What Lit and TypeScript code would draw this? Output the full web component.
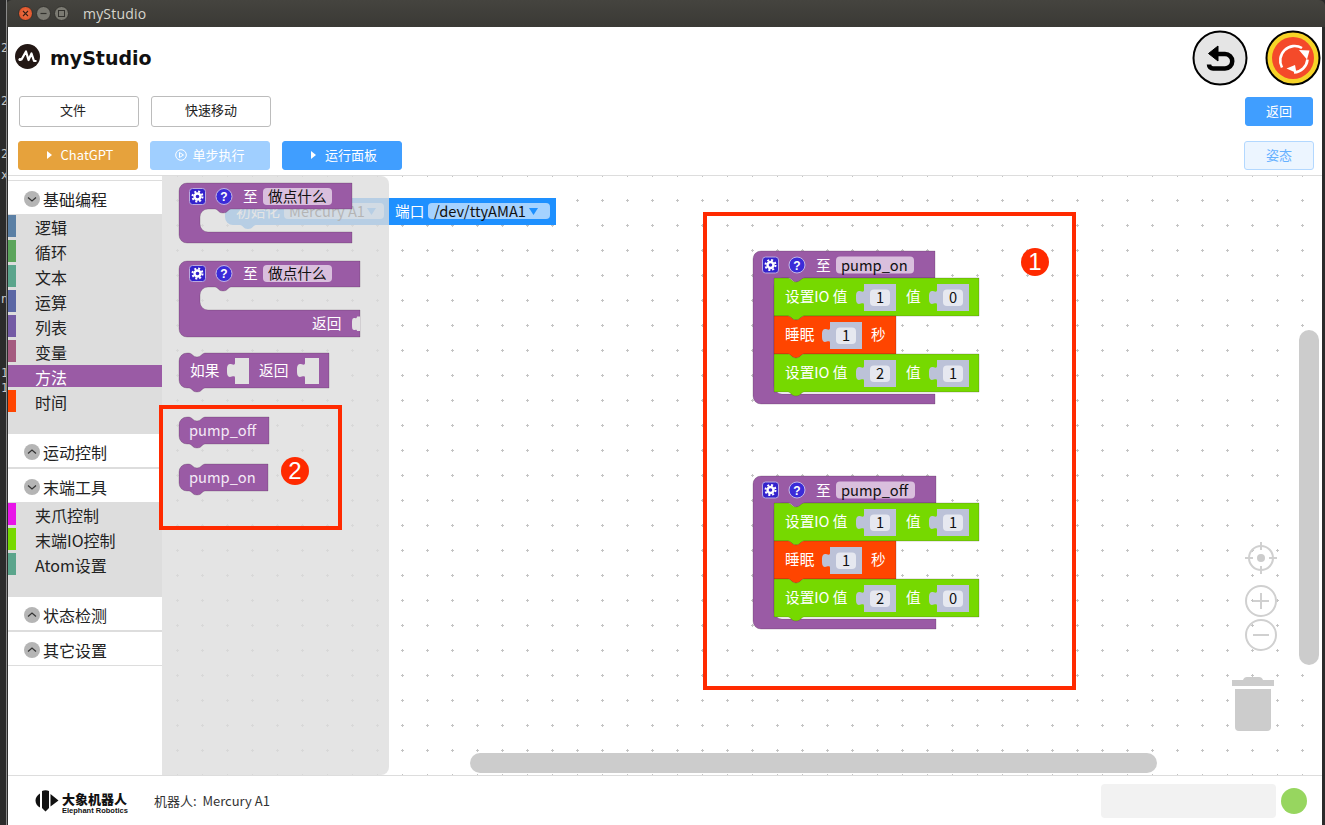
import { LitElement, html, svg, css } from 'lit';
import { customElement } from 'lit/decorators.js';

const PURPLE = '#9a5ba5';
const GREEN = '#76d900';
const RED = '#ff4500';
const FLY = '#e2e2e2';

const notch = 'c 3 0 4 4 8 4 s 5 -4 8 -4';
const notchBack = 'c -3 0 -3 4 -8 4 s -5 -4 -8 -4';
// puzzle tab on the left side of a value input, drawn bottom to top
const tab = 'c 0 -3 -3 -1 -5 -1 c -3 0 -3 -4 -3 -6.5 s 0 -6.5 3 -6.5 c 2 0 5 2 5 -1';

// definition block with a cavity ("至 ...")
function defBlock(x: number, y: number, right: number, rowBot: number, cavBot: number, bottom: number) {
  const d = `M${x} ${y + 8} a8 8 0 0 1 8 -8 H${right} V${rowBot} H${x + 52} ${notchBack} H${x + 29} a8 8 0 0 0 -8 8 V${cavBot - 8} a8 8 0 0 0 8 8 H${right} V${bottom} H${x + 8} a8 8 0 0 1 -8 -8 Z`;
  return svg`<path class="edge" d=${d} fill=${PURPLE}></path>`;
}

function defHead(x: number, y: number, label: string, chipW: number) {
  return svg`
    <rect x=${x + 0.5} y=${y + 0.5} width="16" height="16" rx="3" fill="#3322cc" stroke="#b9a9e0"></rect>
    <circle cx=${x + 8.5} cy=${y + 8.5} r="3" fill="none" stroke="#fff" stroke-width="2.4"></circle>
    <circle cx=${x + 8.5} cy=${y + 8.5} r="5" fill="none" stroke="#fff" stroke-width="2" stroke-dasharray="2 1.93"></circle>
    <circle cx=${x + 35} cy=${y + 8.5} r="8" fill="#3b2bd8" stroke="#c3b6e6"></circle>
    <text class="q" x=${x + 35} y=${y + 13} text-anchor="middle">?</text>
    <text class="lbl" x=${x + 54} y=${y + 14}>至</text>
    <rect x=${x + 74} y=${y} width=${chipW} height="17" rx="4" fill="#d9bfdd"></rect>
    <text class="val" x=${x + 79} y=${y + 14}>${label}</text>`;
}

function stmt(x: number, y: number, w: number, h: number, color: string) {
  const d = `M${x} ${y} H${x + 14} ${notch} H${x + w} V${y + h} H${x + 30} ${notchBack} H${x} Z`;
  return svg`<path class="edge" d=${d} fill=${color}></path>`;
}

function call(x: number, y: number, w: number, h: number, label: string) {
  const d = `M${x} ${y + 8} a8 8 0 0 1 8 -8 H${x + 10} ${notch} H${x + w} V${y + h} H${x + 26} ${notchBack} H${x + 8} a8 8 0 0 1 -8 -8 Z`;
  return svg`<path class="edge" d=${d} fill=${PURPLE}></path>
    <text class="lbl light" x=${x + 10} y=${y + 19}>${label}</text>`;
}

// numeric shadow block plugged into a statement row
function numInput(x: number, y: number, n: string) {
  const d = `M${x} ${y} H${x + 32} V${y + 27} H${x} V${y + 21} ${tab} Z`;
  return svg`<path d=${d} fill="#bcc2d8"></path>
    <rect x=${x + 6} y=${y + 5.5} width="20" height="16.5" rx="4" fill="#e6e8f0"></rect>
    <text class="val" x=${x + 16} y=${y + 19} text-anchor="middle">${n}</text>`;
}

function socket(x: number, y: number, w: number, h: number) {
  const d = `M${x} ${y} H${x + w} V${y + h} H${x} V${y + 20} ${tab} Z`;
  return svg`<path d=${d} fill=${FLY}></path>`;
}

function ioRow(x: number, y: number, a: string, b: string) {
  return svg`${stmt(x, y, 205, 38, GREEN)}
    <text class="lbl" x=${x + 11} y=${y + 24}>设置IO 值</text>
    ${numInput(x + 90, y + 6, a)}
    <text class="lbl" x=${x + 132} y=${y + 24}>值</text>
    ${numInput(x + 163, y + 6, b)}`;
}

function procBlock(x: number, y: number, right: number, name: string, chipW: number, a: string, b: string, c: string, d: string) {
  return svg`${defBlock(x, y, right, y + 27, y + 143, y + 153)}
    ${defHead(x + 9, y + 5.5, name, chipW)}
    ${ioRow(x + 21, y + 27, a, b)}
    ${stmt(x + 21, y + 65, 122, 38, RED)}
    <text class="lbl" x=${x + 32} y=${y + 89}>睡眠</text>
    ${numInput(x + 77, y + 71, '1')}
    <text class="lbl" x=${x + 118} y=${y + 89}>秒</text>
    ${ioRow(x + 21, y + 103, c, d)}`;
}

interface Item { name: string; color: string; active?: boolean; }

const BASIC: Item[] = [
  { name: '逻辑', color: '#5b80a5' },
  { name: '循环', color: '#5ba55b' },
  { name: '文本', color: '#5ba58c' },
  { name: '运算', color: '#5b67a5' },
  { name: '列表', color: '#745ba5' },
  { name: '变量', color: '#a55b80' },
  { name: '方法', color: PURPLE, active: true },
  { name: '时间', color: RED },
];

const TOOLS: Item[] = [
  { name: '夹爪控制', color: '#e815e8' },
  { name: '末端IO控制', color: GREEN },
  { name: 'Atom设置', color: '#5ba58c' },
];

const TERM = [
  { y: 41, c: '2' }, { y: 94, c: '2' }, { y: 147, c: '2' }, { y: 168, c: 'x' },
  { y: 292, c: 'n' }, { y: 366, c: '1' }, { y: 381, c: '1' },
];

@customElement('app-root')
export class AppRoot extends LitElement {
  static styles = css`
    :host {
      display: block;
      width: 1325px;
      height: 825px;
      overflow: hidden;
      font-family: "Noto Sans CJK SC", "Noto Sans", sans-serif;
    }
    .app { position: relative; display: flex; width: 1325px; height: 825px; background: #2b2b2b; }
    .term { position: relative; width: 7px; flex: none; background: #2b2b2b; border-right: 1px solid #8a8a8a; box-sizing: border-box; }
    .term span { position: absolute; left: 1px; font: 12px "DejaVu Sans Mono", monospace; color: #c9c9c9; width: 5px; overflow: hidden; }
    .win { flex: 1; display: flex; flex-direction: column; min-width: 0; margin-left: 1px; }
    .titlebar {
      height: 27px; flex: none; display: flex; align-items: center; margin-left: -2px; padding-left: 12px;
      background: linear-gradient(#45443f, #3a3935); border-radius: 6px 6px 0 0;
      color: #d6d5cd; font: 14px "Open Sans", sans-serif;
    }
    .wbtn { width: 15px; height: 15px; border-radius: 50%; margin-right: 3px; background: #7b7a72; border: 1px solid #33322e; box-sizing: border-box; display: flex; align-items: center; justify-content: center; }
    .wbtn.close { background: radial-gradient(#f0764a, #d9481f); }
    .wtitle { margin-left: 11px; letter-spacing: .2px; }
    .page { flex: 1; display: flex; flex-direction: column; background: #fff; min-height: 0; margin-right: 3px; }
    .head { height: 63px; box-sizing: border-box; flex: none; display: flex; align-items: center; padding: 0 1px 2px 7px; }
    .logo { width: 25px; height: 25px; flex: none; margin-bottom: 2px; }
    .brand { margin-left: 10px; font: bold 19px "DejaVu Sans", sans-serif; color: #111; flex: 1; }
    .round { width: 56px; height: 56px; margin-left: 17px; flex: none; display: block; }
    .bar { display: flex; align-items: center; gap: 12px; flex: none; }
    .bar.one { height: 31px; margin-top: 6px; padding: 0 9px 0 11px; }
    .bar.two { height: 29px; margin-top: 14px; padding: 0 8px 0 10px; }
    .spacer { flex: 1; }
    .btn {
      height: 100%; width: 120px; box-sizing: border-box; border-radius: 3px; border: 1px solid #bcbcbc; padding-bottom: 2px;
      background: #fff; color: #222; font-size: 13px; display: flex; align-items: center; justify-content: center; gap: 9px;
    }
    .btn.plain { padding-bottom: 4px; }
    .btn.file { padding-right: 12px; }
    .btn.gold { background: #e6a23c; border-color: #e6a23c; color: #fff; padding-left: 4px; }
    .btn.pale { background: #a0cfff; border-color: #a0cfff; color: #fff; gap: 5px; }
    .btn.blue { background: #409eff; border-color: #409eff; color: #fff; padding-left: 4px; }
    .btn.back { width: 68px; height: 29px; background: #409eff; border-color: #409eff; color: #fff; }
    .btn.pose { width: 70px; background: #ecf5ff; border-color: #b3d8ff; color: #66b1ff; }
    .caret { width: 0; height: 0; border-left: 5px solid #fff; border-top: 4px solid transparent; border-bottom: 4px solid transparent; }
    .main { flex: 1; display: flex; min-height: 0; margin-top: 5px; border-top: 1px solid #ddd; }
    .side { width: 154px; flex: none; background: #fff; padding-top: 4px; font-size: 16px; color: #222; }
    .group { height: 33px; box-sizing: border-box; display: flex; align-items: center; padding: 2px 0 0 16px; gap: 3px; }
    .chev { width: 16px; height: 16px; flex: none; }
    .line { height: 1px; background: #ddd; }
    .line.wide { height: 2px; }
    .panel { background: #ddd; padding: 1px 0 19px; }
    .item { display: flex; height: 22px; margin-bottom: 3px; line-height: 24px; }
    .item.on { background: #9a5ba5; color: #fff; }
    .swatch { width: 8px; height: 22px; flex: none; margin-right: 19px; }
    .canvas { flex: 1; min-width: 0; }
    .canvas svg { display: block; }
    .foot { height: 49px; flex: none; border-top: 1px solid #ddd; display: flex; align-items: center; padding: 0 15px 0 27px; }
    .fmark { width: 24px; height: 24px; flex: none; }
    .fname { margin-left: 3px; width: 92px; padding-top: 6px; display: flex; flex-direction: column; color: #111; font-weight: 700; }
    .fname b { font-size: 13px; line-height: 14px; letter-spacing: 0; }
    .fname i { font-style: normal; font-size: 7.5px; line-height: 9px; font-family: "Liberation Sans", sans-serif; }
    .robot { font-size: 13px; color: #333; flex: 1; }
    .status { width: 175px; height: 34px; border-radius: 4px; background: #f2f2f2; }
    .led { width: 26px; height: 26px; border-radius: 50%; background: #97d65f; margin-left: 5px; }
    .mark { position: absolute; border: 4px solid #ff2a00; box-sizing: border-box; }
    .mark.a { left: 703px; top: 212px; width: 373px; height: 478px; }
    .mark.b { left: 159px; top: 405px; width: 183px; height: 125px; }
    .badge {
      position: absolute; width: 28px; height: 28px; border-radius: 50%; background: #ff2a00; color: #fff;
      font: 24px "Liberation Sans", sans-serif; display: flex; align-items: center; justify-content: center;
    }
    .badge.a { left: 1021px; top: 248px; }
    .badge.b { left: 281px; top: 457px; }
    text { font-family: "Noto Sans CJK SC", "Noto Sans", sans-serif; }
    .lbl { font-size: 14.67px; fill: #fff; }
    .lbl.light { fill: #f4e9f6; }
    .val { font-size: 14.67px; fill: #111; }
    .q { font: bold 12px "Liberation Sans", sans-serif; fill: #fff; }
    .edge { stroke: rgba(60, 30, 60, .22); stroke-width: 1; }
  `;

  private chevron(open: boolean) {
    const d = open ? 'M4 6.5 L8 10 L12 6.5' : 'M4 9.5 L8 6 L12 9.5';
    return html`<svg class="chev" viewBox="0 0 16 16">
      <circle cx="8" cy="8" r="8" fill="#b5b5b5"></circle>
      <path d=${d} fill="none" stroke="#333" stroke-width="1.2"></path>
    </svg>`;
  }

  private group(name: string, open: boolean) {
    return html`<div class="group">${this.chevron(open)}<span>${name}</span></div>`;
  }

  private items(list: Item[]) {
    return html`<div class="panel">
      ${list.map(
        (i) => html`<div class="item ${i.active ? 'on' : ''}">
          <div class="swatch" style="background:${i.color}"></div>${i.name}
        </div>`
      )}
    </div>`;
  }

  private workspace() {
    return html`<svg width="1160" height="599" viewBox="162 176 1160 599">
      <defs>
        <pattern id="dots" patternUnits="userSpaceOnUse" width="25" height="25" x="15" y="13">
          <path d="M11 12.5h3M12.5 11v3" stroke="#c4c4c4" stroke-width="1"></path>
        </pattern>
      </defs>
      <rect x="162" y="176" width="1160" height="599" fill="#fff"></rect>
      <rect x="162" y="176" width="1160" height="599" fill="url(#dots)"></rect>

      <!-- block dragged under the flyout -->
      <path d="M225 206 a8 8 0 0 1 8 -8 H556 V225 H256 c -3 0 -3 4 -8 4 s -5 -4 -8 -4 H233 a8 8 0 0 1 -8 -8 Z" fill="#1e90ff"></path>
      <text class="lbl" x="236" y="217">初始化</text>
      <rect x="284" y="203" width="100" height="16" rx="4" fill="#a5d2ff"></rect>
      <text class="val" x="289" y="217">Mercury A1</text>
      <path d="M367 208h9l-4.5 7z" fill="#1e90ff"></path>
      <text class="lbl" x="395" y="217">端口</text>
      <rect x="428" y="203" width="122" height="16" rx="4" fill="#a5d2ff"></rect>
      <text class="val" x="434" y="217">/dev/ttyAMA1</text>
      <path d="M529 208h9l-4.5 7z" fill="#1e90ff"></path>

      <!-- flyout -->
      <path d="M162 176 H381 a8 8 0 0 1 8 8 V767 a8 8 0 0 1 -8 8 H162 Z" fill="#ddd" opacity=".8"></path>

      ${defBlock(179, 183, 352, 209, 232, 243)}
      ${defHead(189, 188, '做点什么', 69)}

      ${defBlock(179, 261, 360, 287, 310, 337)}
      ${defHead(189, 265, '做点什么', 69)}
      <text class="lbl" x="312" y="329">返回</text>
      <path d="M360 316.5 V331 H357 c 0 -2 -2 -1 -3 -1 c -2 0 -2 -3 -2 -6 s 0 -6 2 -6 c 1 0 3 1 3 -1.5 Z" fill=${FLY}></path>

      <path class="edge" d="M179 361 a8 8 0 0 1 8 -8 H189 ${notch} H329 V388 H205 ${notchBack} H187 a8 8 0 0 1 -8 -8 Z" fill=${PURPLE}></path>
      <text class="lbl" x="190" y="376">如果</text>
      ${socket(235, 358, 14, 26)}
      <text class="lbl" x="259" y="376">返回</text>
      ${socket(305, 358, 14, 26)}

      ${call(179, 417, 90, 27, 'pump_off')}
      ${call(179, 464, 89, 27, 'pump_on')}

      ${procBlock(753, 251, 935, 'pump_on', 78, '1', '0', '2', '1')}
      ${procBlock(753, 476, 936, 'pump_off', 79, '1', '1', '2', '0')}

      <!-- scrollbars -->
      <rect x="1299" y="330" width="20" height="335" rx="10" fill="#ccc"></rect>
      <rect x="470" y="753" width="687" height="20" rx="10" fill="#ccc"></rect>

      <!-- controls -->
      <g fill="none" stroke="#d0d0d0" stroke-width="2">
        <circle cx="1261" cy="558" r="12"></circle>
        <path d="M1261 542v8M1261 566v8M1245 558h8M1269 558h8"></path>
        <circle cx="1261" cy="601" r="15"></circle>
        <path d="M1253 601h16M1261 593v16"></path>
        <circle cx="1261" cy="635" r="15"></circle>
        <path d="M1253 635h16"></path>
      </g>
      <circle cx="1261" cy="558" r="4" fill="#ccc"></circle>
      <path d="M1232 680 H1243 q1 -3 4 -3 H1259 q3 0 4 3 H1274 V686 H1232 Z M1235 689 H1271 V727 a4 4 0 0 1 -4 4 H1239 a4 4 0 0 1 -4 -4 Z" fill="#ccc"></path>
    </svg>`;
  }

  render() {
    return html`<div class="app">
      <div class="term">
        ${TERM.map((t) => html`<span style="top:${t.y}px">${t.c}</span>`)}
      </div>
      <div class="win">
        <div class="titlebar">
          <div class="wbtn close">
            <svg width="7" height="7" viewBox="0 0 7 7"><path d="M1 1l5 5M6 1L1 6" stroke="#3a2015" stroke-width="1.1"></path></svg>
          </div>
          <div class="wbtn">
            <svg width="7" height="7" viewBox="0 0 7 7"><path d="M0.5 3.5h6" stroke="#33322e" stroke-width="1.2"></path></svg>
          </div>
          <div class="wbtn">
            <svg width="7" height="7" viewBox="0 0 7 7"><rect x="0.5" y="0.5" width="6" height="6" fill="none" stroke="#33322e"></rect></svg>
          </div>
          <span class="wtitle">myStudio</span>
        </div>
        <div class="page">
          <div class="head">
            <svg class="logo" viewBox="0 0 25 25">
              <circle cx="12.5" cy="12.5" r="12.5" fill="#231815"></circle>
              <path d="M4 15.5 h2.5 L11 7.5 L13.5 16 L16.5 9.5 L19 17 h2.5" fill="none" stroke="#fff" stroke-width="2.2" stroke-linejoin="round"></path>
              <circle cx="5" cy="15.5" r="1.6" fill="#fff"></circle>
            </svg>
            <div class="brand">myStudio</div>
            <svg class="round" viewBox="0 0 56 56">
              <circle cx="28" cy="28" r="26.5" fill="#e5e5e5" stroke="#000" stroke-width="2"></circle>
              <path d="M22 24 H33 a7 7 0 0 1 0 14.5 H21 a4 4 0 0 1 -4 -4" fill="none" stroke="#000" stroke-width="4.5"></path>
              <path d="M16.5 23.5 L26 16 V31 Z" fill="#000" stroke="#000" stroke-linejoin="round"></path>
            </svg>
            <svg class="round" viewBox="0 0 56 56">
              <circle cx="28" cy="28" r="26.5" fill="#f6d327" stroke="#000" stroke-width="2"></circle>
              <circle cx="28" cy="28" r="21" fill="#f44a2a"></circle>
              <g fill="none" stroke="#fff" stroke-width="2.6">
                <path d="M17 37.5 A14.5 14.5 0 0 1 37 18"></path>
                <path d="M42.5 29.5 A14.5 14.5 0 0 1 29 42.5"></path>
              </g>
              <path d="M34 20 L44.5 20.5 L42 29.5 Z M21.5 38.5 L30 35 L31.5 43 Z" fill="#fff"></path>
            </svg>
          </div>
          <div class="bar one">
            <div class="btn plain file">文件</div>
            <div class="btn plain">快速移动</div>
            <div class="spacer"></div>
            <div class="btn back">返回</div>
          </div>
          <div class="bar two">
            <div class="btn gold"><span class="caret"></span>ChatGPT</div>
            <div class="btn pale">
              <svg width="12" height="12" viewBox="0 0 12 12">
                <circle cx="6" cy="6" r="5.3" fill="none" stroke="#fff"></circle>
                <path d="M4.5 3.5 L8.5 6 L4.5 8.5 Z" fill="none" stroke="#fff"></path>
              </svg>单步执行
            </div>
            <div class="btn blue"><span class="caret"></span>运行面板</div>
            <div class="spacer"></div>
            <div class="btn pose">姿态</div>
          </div>
          <div class="main">
            <div class="side">
              <div class="line"></div>
              ${this.group('基础编程', true)}
              ${this.items(BASIC)}
              ${this.group('运动控制', false)}
              <div class="line wide"></div>
              ${this.group('末端工具', true)}
              ${this.items(TOOLS)}
              ${this.group('状态检测', false)}
              <div class="line wide"></div>
              ${this.group('其它设置', false)}
              <div class="line"></div>
            </div>
            <div class="canvas">${this.workspace()}</div>
          </div>
          <div class="foot">
            <svg class="fmark" viewBox="0 0 24 24">
              <path d="M5 4.5 C2 6 0.5 9 0.5 11.5 C0.5 14 2 17 5 18.5 Z M7 2 C9 1 12 1 14 2 V19 L10.5 22.5 L7 19 Z M15.5 5 L23.5 11.5 L15.5 17.5 Z" fill="#111"></path>
            </svg>
            <div class="fname"><b>大象机器人</b><i>Elephant Robotics</i></div>
            <div class="robot">机器人:&nbsp;&nbsp;Mercury A1</div>
            <div class="status"></div>
            <div class="led"></div>
          </div>
        </div>
      </div>
      <div class="mark a"></div>
      <div class="mark b"></div>
      <div class="badge a">1</div>
      <div class="badge b">2</div>
    </div>`;
  }
}
